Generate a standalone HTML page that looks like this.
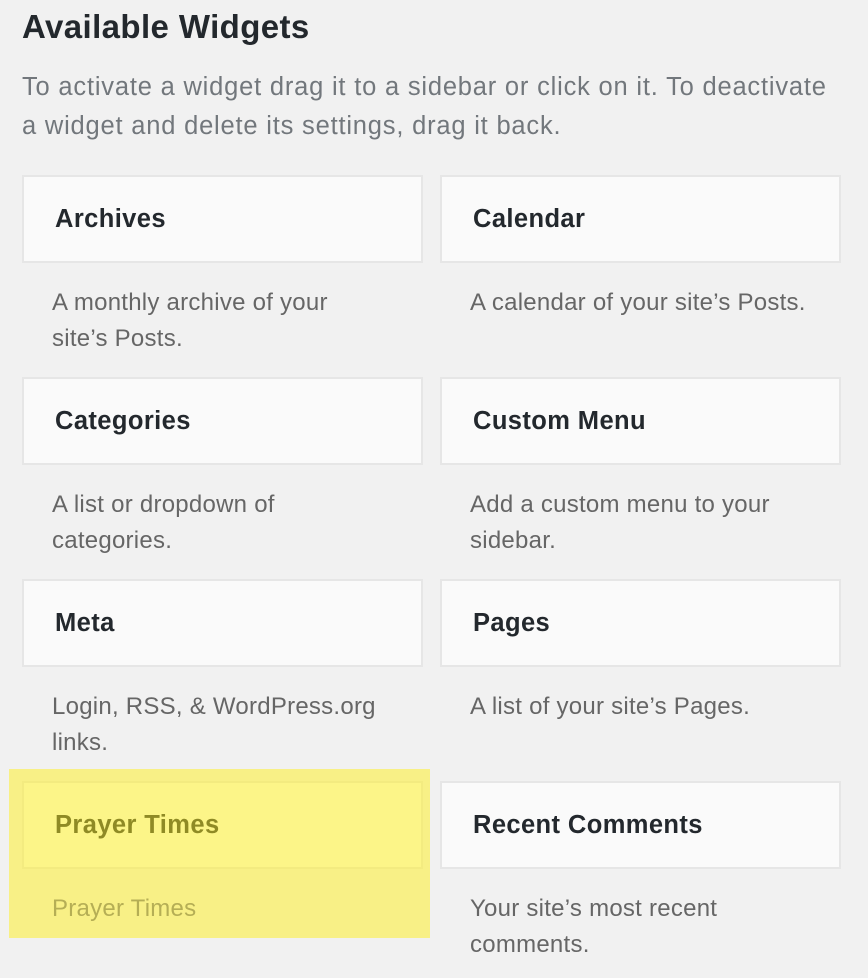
<!DOCTYPE html>
<html><head><meta charset="utf-8"><style>
body{margin:0;width:868px;height:978px;background:#f1f1f1;font-family:"Liberation Sans",sans-serif;position:relative;overflow:hidden}
h1{position:absolute;left:22px;top:8px;margin:0;font-size:33px;font-weight:bold;color:#23282d;letter-spacing:0.4px;white-space:nowrap}
.intro{position:absolute;left:22px;top:68px;margin:0;font-size:25.5px;line-height:39px;color:#72777c;white-space:nowrap;letter-spacing:0.8px}
.hl{position:absolute;left:9px;top:769px;width:421px;height:169px;background:#f8f086}
.box{position:absolute;width:397px;height:84px;background:#fafafa;border:2px solid #e6e6e6;box-sizing:content-box}
.box span{position:absolute;left:31px;top:28px;font-size:25.5px;font-weight:bold;color:#23282d;letter-spacing:0.4px;white-space:nowrap}
.d{position:absolute;font-size:24px;line-height:36px;color:#666;white-space:nowrap;letter-spacing:0.25px}
.y .box{background:#fcf588;border-color:#f3eb80}
.y .box span{color:#8f8a25}
.y .d{color:#b5ae55}
</style></head><body>
<h1>Available Widgets</h1>
<p class="intro">To activate a widget drag it to a sidebar or click on it. To deactivate<br>a widget and delete its settings, drag it back.</p>

<div class="box" style="left:22px;top:175px"><span>Archives</span></div>
<div class="d" style="left:52px;top:285px">A monthly archive of your<br>site’s Posts.</div>
<div class="box" style="left:440px;top:175px"><span>Calendar</span></div>
<div class="d" style="left:470px;top:285px">A calendar of your site’s Posts.</div>

<div class="box" style="left:22px;top:377px"><span>Categories</span></div>
<div class="d" style="left:52px;top:487px">A list or dropdown of<br>categories.</div>
<div class="box" style="left:440px;top:377px"><span>Custom Menu</span></div>
<div class="d" style="left:470px;top:487px">Add a custom menu to your<br>sidebar.</div>

<div class="box" style="left:22px;top:579px"><span>Meta</span></div>
<div class="d" style="left:52px;top:689px">Login, RSS, &amp; WordPress.org<br>links.</div>
<div class="box" style="left:440px;top:579px"><span>Pages</span></div>
<div class="d" style="left:470px;top:689px">A list of your site’s Pages.</div>

<div class="y">
<div class="hl"></div>
<div class="box" style="left:22px;top:781px"><span>Prayer Times</span></div>
<div class="d" style="left:52px;top:891px">Prayer Times</div>
</div>
<div class="box" style="left:440px;top:781px"><span>Recent Comments</span></div>
<div class="d" style="left:470px;top:891px">Your site’s most recent<br>comments.</div>
</body></html>
